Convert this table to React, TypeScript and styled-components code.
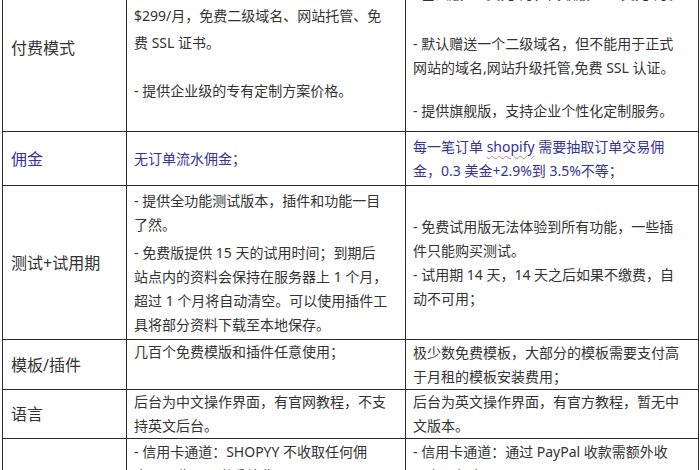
import React from 'react';
import styled, { createGlobalStyle } from 'styled-components';

const Global = createGlobalStyle`
  html, body {
    margin: 0;
    padding: 0;
    background: #ffffff;
  }
  body {
    width: 700px;
    height: 470px;
    overflow: hidden;
    font-family: "Noto Sans", "Noto Sans CJK SC", sans-serif;
  }
`;

const Table = styled.table`
  border-collapse: collapse;
  table-layout: fixed;
  width: 696px;
  margin: -36px 0 0 2px;
  color: #333333;
  font-size: 14px;
  line-height: 24px;
`;

const Col = styled.col<{ $w: number }>`
  width: ${(p) => p.$w}px;
`;

const Row = styled.tr<{ $blue?: boolean }>`
  color: ${(p) => (p.$blue ? '#33339a' : '#333333')};
`;

const Label = styled.td<{ $h: number }>`
  height: ${(p) => p.$h}px;
  border: 1px solid #2b2b2b;
  padding: 0 0 0 8px;
  vertical-align: middle;
  font-size: 16px;
  white-space: nowrap;
`;

const Cell = styled.td<{ $top?: boolean; $pt?: number }>`
  border: 1px solid #2b2b2b;
  padding: ${(p) => p.$pt ?? 0}px 6px 0 7px;
  vertical-align: ${(p) => (p.$top ? 'top' : 'middle')};
  overflow: hidden;
`;

const Line = styled.div<{ $mt?: number }>`
  margin-top: ${(p) => p.$mt ?? 0}px;
  white-space: nowrap;
`;

const Squiggle = styled.span`
  text-decoration: underline wavy #d27a8c;
  text-decoration-thickness: 1px;
  text-underline-offset: 3px;
`;

export default function App() {
  return (
    <>
      <Global />
      <Table>
        <colgroup>
          <Col $w={124} />
          <Col $w={279} />
          <Col $w={293} />
        </colgroup>
        <tbody>
          <Row>
            <Label $h={166}>付费模式</Label>
            <Cell $top $pt={39}>
              <Line>$299/月，免费二级域名、网站托管、免</Line>
              <Line $mt={3}>费 SSL 证书。</Line>
              <Line $mt={24}>- 提供企业级的专有定制方案价格。</Line>
            </Cell>
            <Cell $top $pt={17}>
              <Line>- 基础版 29 美元/月，高级版 299 美元/月。</Line>
              <Line $mt={26}>- 默认赠送一个二级域名，但不能用于正式</Line>
              <Line>网站的域名,网站升级托管,免费 SSL 认证。</Line>
              <Line $mt={19}>- 提供旗舰版，支持企业个性化定制服务。</Line>
            </Cell>
          </Row>
          <Row $blue>
            <Label $h={53}>佣金</Label>
            <Cell>
              <Line>无订单流水佣金；</Line>
            </Cell>
            <Cell>
              <Line>
                每一笔订单 <Squiggle>shopify</Squiggle> 需要抽取订单交易佣
              </Line>
              <Line>金，0.3 美金+2.9%到 3.5%不等；</Line>
            </Cell>
          </Row>
          <Row>
            <Label $h={153}>测试+试用期</Label>
            <Cell>
              <Line>- 提供全功能测试版本，插件和功能一目</Line>
              <Line>了然。</Line>
              <Line $mt={4}>- 免费版提供 15 天的试用时间；到期后</Line>
              <Line>站点内的资料会保持在服务器上 1 个月，</Line>
              <Line>超过 1 个月将自动清空。可以使用插件工</Line>
              <Line>具将部分资料下载至本地保存。</Line>
            </Cell>
            <Cell>
              <Line>- 免费试用版无法体验到所有功能，一些插</Line>
              <Line>件只能购买测试。</Line>
              <Line>- 试用期 14 天，14 天之后如果不缴费，自</Line>
              <Line>动不可用；</Line>
            </Cell>
          </Row>
          <Row>
            <Label $h={49}>模板/插件</Label>
            <Cell $top>
              <Line>几百个免费模版和插件任意使用；</Line>
            </Cell>
            <Cell>
              <Line>极少数免费模板，大部分的模板需要支付高</Line>
              <Line>于月租的模板安装费用；</Line>
            </Cell>
          </Row>
          <Row>
            <Label $h={48}>语言</Label>
            <Cell>
              <Line>后台为中文操作界面，有官网教程，不支</Line>
              <Line>持英文后台。</Line>
            </Cell>
            <Cell>
              <Line>后台为英文操作界面，有官方教程，暂无中</Line>
              <Line>文版本。</Line>
            </Cell>
          </Row>
          <Row>
            <Label $h={160}>支付</Label>
            <Cell $top $pt={1}>
              <Line>- 信用卡通道：SHOPYY 不收取任何佣</Line>
              <Line>金，只收取通道手续费；</Line>
            </Cell>
            <Cell $top $pt={1}>
              <Line>- 信用卡通道：通过 PayPal 收款需额外收</Line>
              <Line>取交易佣金；</Line>
            </Cell>
          </Row>
        </tbody>
      </Table>
    </>
  );
}
